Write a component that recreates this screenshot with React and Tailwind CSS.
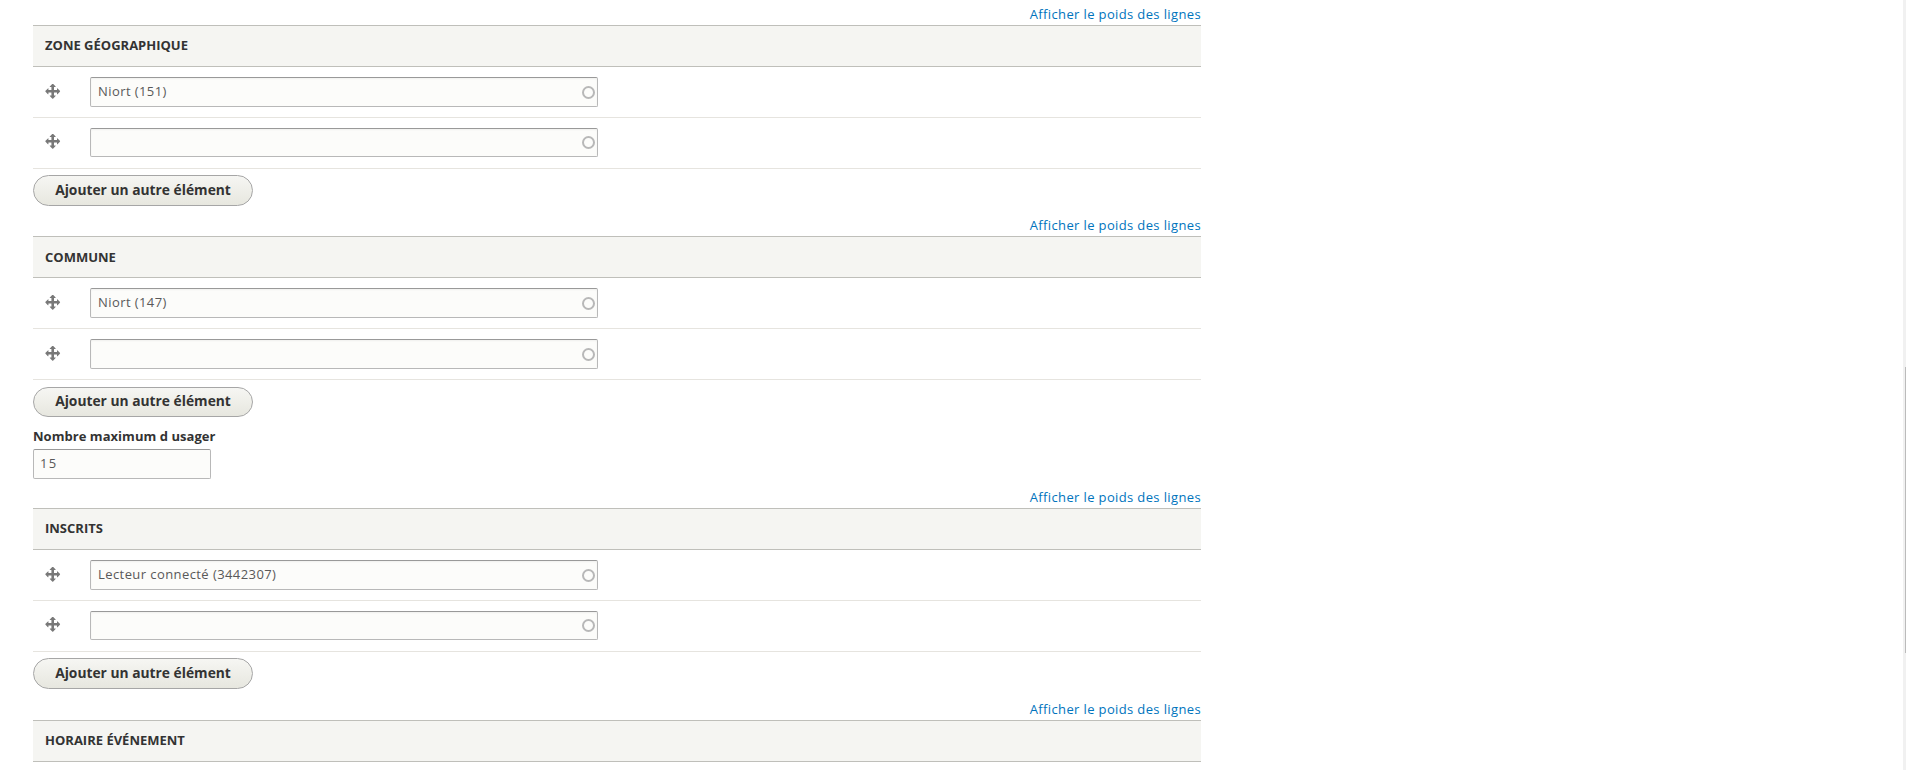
const FONT = "font-['Open_Sans',sans-serif]";

function MoveIcon() {
  return (
    <svg viewBox="0 0 16 16" className="w-4 h-4 block" fill="#787878">
      <path d="M14.904 7.753l-2.373-2.372c-.291-.292-.529-.193-.529.22v1.399h-3v-3h1.399c.414 0 .512-.239.221-.53l-2.374-2.372c-.292-.292-.768-.292-1.06 0l-2.373 2.372c-.292.292-.193.53.22.53h1.397v3h-3v-1.4c0-.413-.239-.511-.53-.22l-2.372 2.373c-.292.292-.292.769 0 1.06l2.372 2.374c.291.292.53.192.53-.221v-1.398h3v3h-1.4c-.413 0-.511.238-.22.53l2.374 2.371c.291.293.768.293 1.059 0l2.373-2.371c.291-.292.192-.53-.221-.53h-1.399v-3h3v1.4c0 .412.238.511.529.22l2.373-2.374c.292-.291.292-.767 0-1.059z" />
    </svg>
  );
}

function Row({ value }) {
  return (
    <div className="flex items-start h-[50.75px] pt-[10px] border-b border-[#e6e4df]">
      <div className="w-[57px] pl-[12px] pt-[5.5px] shrink-0"><MoveIcon /></div>
      <div className="relative w-[508px] h-[29.5px] flex items-center px-[7px] bg-[#fcfcfa] border border-[#b8b8b8] border-t-[#999] rounded-[2px] shadow-[inset_0_1px_2px_rgba(0,0,0,0.05)] text-[13px] text-[#595959] tracking-[0.42px]">
        <span>{value}</span>
        <span className="absolute right-[2px] top-[7.5px] w-[13px] h-[13px] rounded-full border-2 border-[#b8b8b8]" />
      </div>
    </div>
  );
}

function Section({ title, rows }) {
  return (
    <div>
      <div className="flex justify-end h-[25px] items-end pb-[3px] text-[13px] leading-4 tracking-[0.37px] text-[#0074bd]">
        <a>Afficher le poids des lignes</a>
      </div>
      <div className="h-[42px] flex items-center pl-[12px] bg-[#f5f5f2] border-y border-[#bfbfba] text-[13px] font-bold uppercase text-[#333]">
        {title}
      </div>
      {rows && rows.map((r, i) => <Row key={i} value={r} />)}
      {rows && (
        <div className="pt-[6.75px]">
          <button className="block h-[30.5px] w-[220px] rounded-full border border-[#a6a6a6] bg-gradient-to-b from-[#f6f6f3] to-[#e7e7df] text-[13.8px] font-bold text-[#333]">
            Ajouter un autre élément
          </button>
        </div>
      )}
    </div>
  );
}

export default function App() {
  return (
    <div className={`relative h-[770px] overflow-hidden bg-white ${FONT}`}>
      <div className="w-[1168px] ml-[33px]">
        <Section title="Zone géographique" rows={["Niort (151)", ""]} />
        <div className="h-[5.5px]" />
        <Section title="Commune" rows={["Niort (147)", ""]} />
        <div className="mt-[9px] text-[13px] font-bold text-[#333] leading-[20px] tracking-[0.04px]">Nombre maximum d usager</div>
        <div className="mt-[3px] w-[178px] h-[29.5px] flex items-center px-[6px] bg-[#fcfcfa] border border-[#b8b8b8] border-t-[#999] rounded-[2px] text-[13px] text-[#595959] tracking-[1.2px]">15</div>
        <div className="h-[4.5px]" />
        <Section title="Inscrits" rows={["Lecteur connecté (3442307)", ""]} />
        <div className="h-[6px]" />
        <Section title="Horaire événement" />
      </div>
      <div className="absolute right-0 top-0 bottom-0 w-[3px] bg-[#f1f1f1]">
        <div className="absolute right-0 top-[367px] w-[1px] h-[286px] bg-[#bbbbbb]" />
      </div>
    </div>
  );
}
